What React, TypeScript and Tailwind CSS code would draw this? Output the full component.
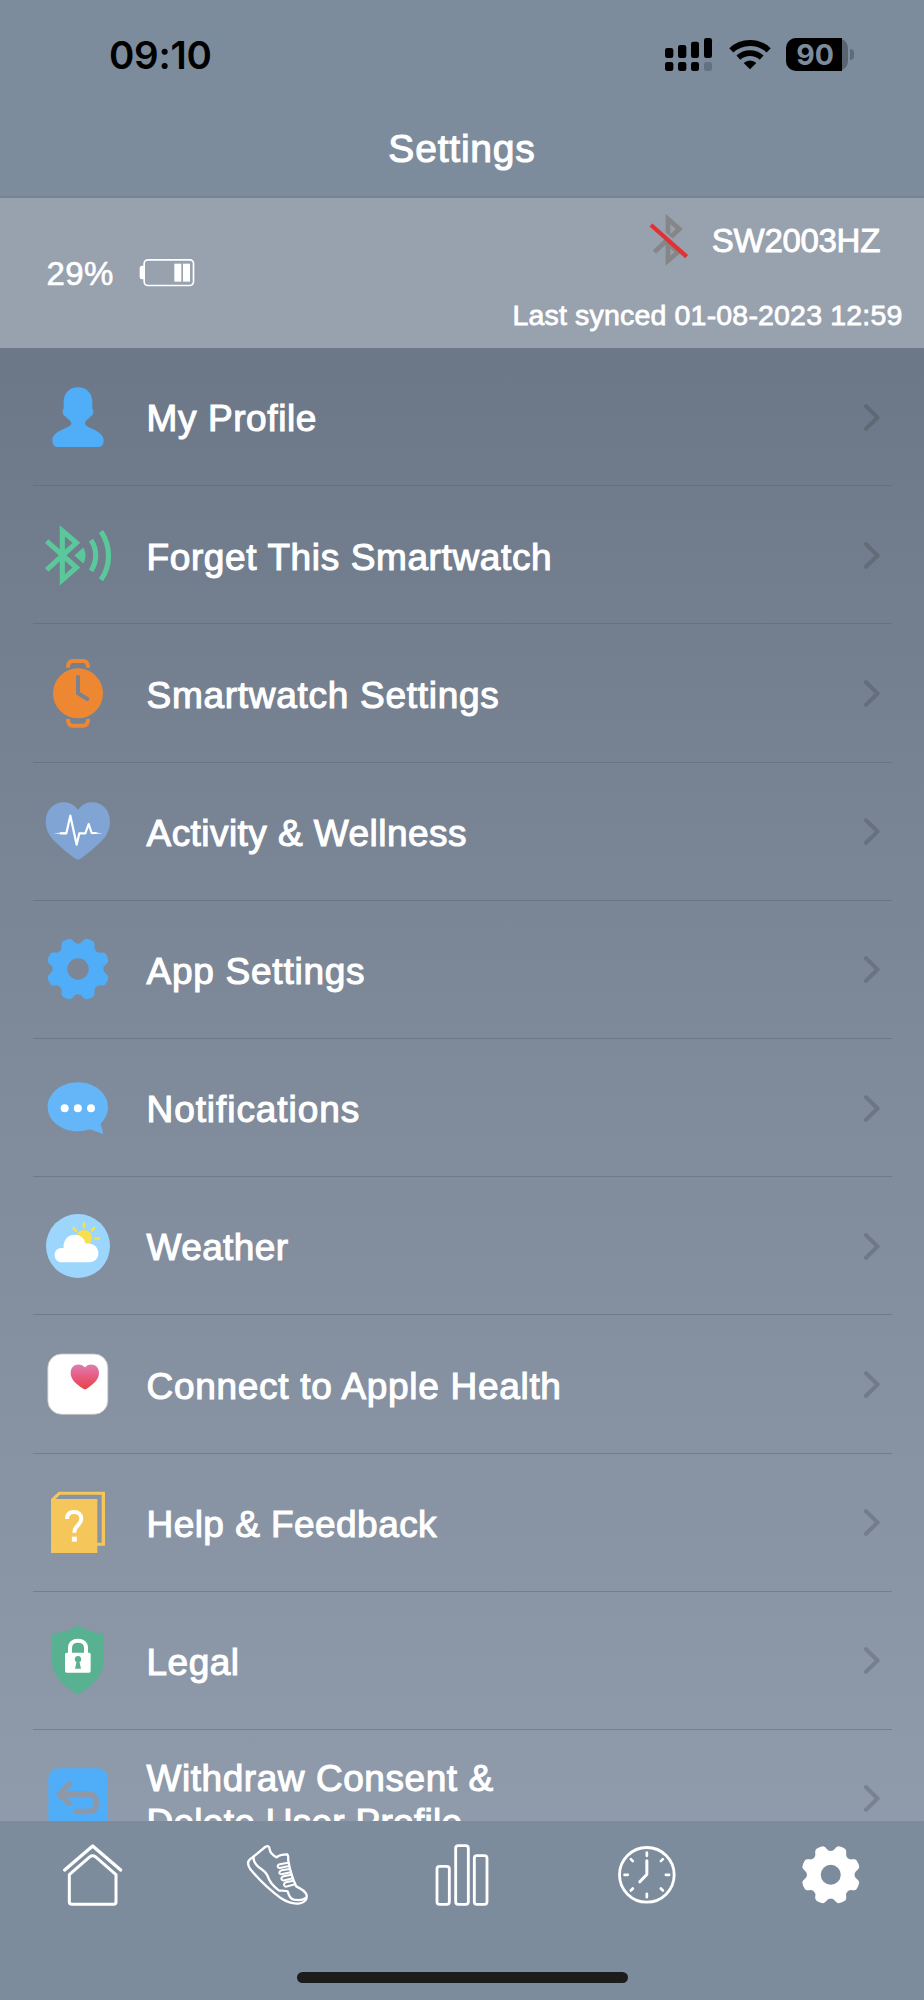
import React from "react";

/** Gear outline centred on the origin: eight teeth with scooped valleys between them. */
function gearPath(): string {
  const turn = (x: number, y: number, deg: number) => {
    const a = (deg * Math.PI) / 180;
    const px = x * Math.cos(a) - y * Math.sin(a);
    const py = x * Math.sin(a) + y * Math.cos(a);
    return `${px.toFixed(2)} ${py.toFixed(2)}`;
  };
  let d = "";
  for (let i = 0; i < 8; i++) {
    const r = i * 45;
    const p = (x: number, y: number) => turn(x, y, r);
    d += `${i === 0 ? "M" : "L"}${p(-25, -89)} `;
    d += `L${p(-20, -87)} C${p(-14, -84)} ${p(-14, -74)} ${p(0, -74)} `;
    d += `C${p(14, -74)} ${p(14, -84)} ${p(20, -87)} L${p(25, -89)} `;
    d += `Q${p(37, -87)} ${turn(-25, -89, r + 45)} `;
  }
  return d + "Z";
}
const GEAR = gearPath();

function Gear({ size, color, hole }: { size: number; color: string; hole: string }) {
  return (
    <svg width={size} height={size} viewBox="-108 -108 216 216">
      <path d={GEAR} fill={color} stroke={color} strokeWidth="4" strokeLinejoin="round" />
      <circle r="32" fill={hole} />
    </svg>
  );
}

function Icon({ box, children }: { box: string; children: React.ReactNode }) {
  return (
    <svg width="72" height="72" viewBox={box} fill="none" className="shrink-0">
      {children}
    </svg>
  );
}

const ProfileIcon = (
  <Icon box="126 92 216 216">
    <path
      fill="#50aef8"
      d="M234 111C208 111 191 129 191 156V175C186 178 187 194 195 197C200 205 214 210 214 219C214 236 157 238 157 270C157 283 163 290 172 290H296C305 290 311 283 311 270C311 238 255 236 255 219C255 210 268 205 273 197C281 194 282 178 277 175V156C277 129 260 111 234 111Z"
    />
  </Icon>
);

const BluetoothIcon = (
  <Icon box="126 506.5 216 216">
    <g stroke="#5ac89b" strokeWidth="15.500">
      <path d="M140 573L229 652L187 689V542L229 578L140 659" />
      <path d="M273 570A82 82 0 0 1 273 662" />
      <path d="M303 544A128 128 0 0 1 303 689" />
    </g>
    <path fill="#5ac89b" d="M223 616L250 592Q263 616 250 640Z" />
  </Icon>
);

const WatchIcon = (
  <Icon box="126 921 216 216">
    <circle cx="234" cy="1030" r="75" fill="#ee8732" />
    <g stroke="#ee8732" strokeWidth="12">
      <path d="M204 953V949Q206 933 218 933H250Q262 933 264 949V953" />
      <path d="M204 1107V1111Q206 1127 218 1127H250Q262 1127 264 1111V1107" />
    </g>
    <path d="M234 981V1030L262 1047" stroke="#7a8190" strokeWidth="12" strokeLinecap="round" strokeLinejoin="round" />
  </Icon>
);

const HeartIcon = (
  <Icon box="126 136 216 216">
    <path
      fill="#80a5d4"
      d="M234 181C224 166 209 158 191 158C160 158 137 182 137 216C137 238 147 258 164 275C183 294 203 311 224 326Q234 333 244 326C265 311 285 294 304 275C321 258 330 238 330 216C330 182 308 158 277 158C259 158 244 166 234 181Z"
    />
    <path d="M160 251L197 247.500V254Z M309 251L275 247.500V254Z" fill="#fff" />
    <path d="M180 251H199L211 198L230 285L238 251H256L266 223L275 250H290" stroke="#fff" strokeWidth="6.5" strokeLinejoin="round" />
  </Icon>
);

const ChatIcon = (
  <Icon box="126 965 216 216">
    <path
      fill="#64b6f9"
      d="M234 996C284 996 324 1029 324 1070C324 1090 315 1107 302 1120L310 1151L270 1137C259 1141 247 1143 234 1143C184 1143 143 1111 143 1070C143 1029 184 996 234 996Z"
    />
    <g fill="#fff">
      <circle cx="194" cy="1074" r="12" />
      <circle cx="233.500" cy="1074" r="12" />
      <circle cx="273" cy="1074" r="12" />
    </g>
  </Icon>
);

const WeatherIcon = (
  <Icon box="126 120 216 216">
    <circle cx="234" cy="228" r="96" fill="#9cd6fd" />
    <circle cx="252" cy="204" r="24" fill="#f8e04c" />
    <g stroke="#f8e04c" strokeWidth="8" strokeLinecap="round">
      <path d="M252 161V170M282 174L276 181M221 174L228 182M286 205.500H296" />
    </g>
    <path
      fill="#fff"
      d="M186 277C173 277 164 268 164 255C164 242 173 234 186 234H191C188 213 203 194 224 194C241 194 253 205 257 221C279 217 295 230 295 250C295 266 284 277 268 277Z"
    />
  </Icon>
);

const HealthIcon = (
  <Icon box="126 534.5 216 216">
    <defs>
      <linearGradient id="health" x1="0" y1="0" x2="0" y2="1">
        <stop offset="0" stopColor="#dc7fae" />
        <stop offset="0.5" stopColor="#e85a80" />
        <stop offset="1" stopColor="#e64442" />
      </linearGradient>
    </defs>
    <rect x="143.500" y="552.500" width="180" height="181" rx="41" fill="#fff" stroke="#c9c6c6" strokeWidth="2.500" />
    <path
      fill="url(#health)"
      d="M255 593C250 587 243 584 236 584C222 584 212 594 212 609C212 631 231 645 250 657Q255 660 260 657C278 645 297 631 297 609C297 594 287 584 273 584C266 584 259 587 255 593Z"
    />
  </Icon>
);

const HelpIcon = (
  <Icon box="126 949 216 216">
    <path fill="#f5c65a" d="M153 988L176 966H315V1128H292V1150H153ZM292 988V1119H305V975H180L167 988Z" fillRule="evenodd" />
    <path d="M201 1048C201 1033 209 1027 222 1027C235 1027 244 1034 244 1047C244 1067 223 1066 223 1089" stroke="#fff" strokeWidth="12" />
    <rect x="215.500" y="1101" width="15" height="15" fill="#fff" />
  </Icon>
);

const LegalIcon = (
  <Icon box="126 194 216 216">
    <path
      fill="#58b191"
      d="M234 198C257 213 283 221 312 224V299C312 348 280 378 234 407C188 378 155 348 155 299V224C184 221 211 213 234 198Z"
    />
    <path d="M210 284V266C210 252 220 244 234 244C248 244 258 252 258 266V284" stroke="#fff" strokeWidth="12" />
    <rect x="195" y="280" width="77" height="60" rx="5" fill="#fff" />
    <path fill="#58b191" d="M234 290A9.500 9.500 0 0 1 238.500 308L243 328H225L229.500 308A9.500 9.500 0 0 1 234 290Z" />
  </Icon>
);

const WithdrawIcon = (
  <Icon box="126 609.5 216 216">
    <rect x="145" y="628" width="178" height="178" rx="30" fill="#50aef8" />
    <path
      d="M208 675L178 706L208 734M180 706H266C280 706 289 716 289 732C289 748 280 758 266 758H229"
      stroke="#8d98a8"
      strokeWidth="17"
      strokeLinecap="round"
      strokeLinejoin="round"
    />
  </Icon>
);

type Line = { text: string; tracking: string };

const ROWS: { lines: Line[]; icon: React.ReactNode }[] = [
  { lines: [{ text: "My Profile", tracking: "tracking-[0.6px]" }], icon: ProfileIcon },
  { lines: [{ text: "Forget This Smartwatch", tracking: "tracking-[0.62px]" }], icon: BluetoothIcon },
  { lines: [{ text: "Smartwatch Settings", tracking: "tracking-[0.72px]" }], icon: WatchIcon },
  { lines: [{ text: "Activity & Wellness", tracking: "tracking-[0.45px]" }], icon: HeartIcon },
  { lines: [{ text: "App Settings", tracking: "tracking-[0.75px]" }], icon: <Gear size={72} color="#50aef8" hole="#7c8697" /> },
  { lines: [{ text: "Notifications", tracking: "tracking-[0.93px]" }], icon: ChatIcon },
  { lines: [{ text: "Weather", tracking: "tracking-[0.4px]" }], icon: WeatherIcon },
  { lines: [{ text: "Connect to Apple Health", tracking: "tracking-[0.7px]" }], icon: HealthIcon },
  { lines: [{ text: "Help & Feedback", tracking: "tracking-[0.45px]" }], icon: HelpIcon },
  { lines: [{ text: "Legal", tracking: "tracking-[0.5px]" }], icon: LegalIcon },
  {
    lines: [
      { text: "Withdraw Consent &", tracking: "tracking-[0.55px]" },
      { text: "Delete User Profile", tracking: "tracking-[0.28px]" },
    ],
    icon: WithdrawIcon,
  },
];

function StatusBar() {
  return (
    <div className="flex h-[110px] items-start justify-between pl-[109px] pr-[70px] text-black">
      <div className="mt-[31px] font-['Inter'] text-[38.5px] leading-[48px] font-semibold tracking-[-0.3px]">09:10</div>
      <div className="mt-[38px] flex items-start">
        <svg width="48" height="33" viewBox="610 114 144 99">
          <rect x="610" y="144" width="25" height="30" rx="7" />
          <rect x="649" y="135" width="25" height="39" rx="7" />
          <rect x="688" y="125" width="24" height="49" rx="7" />
          <rect x="727" y="114" width="24" height="60" rx="7" />
          <rect x="610" y="186" width="25" height="27" rx="7" />
          <rect x="649" y="186" width="25" height="27" rx="7" />
          <rect x="688" y="186" width="24" height="27" rx="7" />
          <rect x="727" y="186" width="24" height="27" rx="7" fill="#65717f" />
        </svg>
        <svg className="ml-[15.5px]" width="42" height="33" viewBox="799 114 126 99" fill="none">
          <path d="M806 151A82 82 0 0 1 918 151" stroke="#000" strokeWidth="18" />
          <path d="M827 173A52 52 0 0 1 897 173" stroke="#000" strokeWidth="17" />
          <path d="M862 208L843 189A27 27 0 0 1 881 189Z" fill="#000" />
        </svg>
        <div className="ml-[15.5px] flex h-[33px] items-center">
          <div className="flex h-[33px] w-[62px] items-center rounded-[10px] bg-[#586470]">
            <div className="flex h-full w-[56px] items-center justify-center rounded-l-[10px] bg-black pl-[2px] font-['Inter'] text-[28.5px] leading-[33px] font-bold text-[#7d8c9c]">
              90
            </div>
          </div>
          <div className="ml-[2px] h-[11px] w-[4px] rounded-r-full bg-[#5f6b78]" />
        </div>
      </div>
    </div>
  );
}

function DevicePanel() {
  return (
    <section className="flex h-[150px] justify-between bg-[#98a1ae]">
      <div className="flex items-start pl-[46.5px]">
        <div className="mt-[56px] w-[70px] text-[33px] leading-[40px] tracking-[0.4px] [-webkit-text-stroke:0.6px_white]">29%</div>
        <svg className="mt-[61px] ml-[22.500px]" width="56" height="28" viewBox="418 777 168 84" fill="none">
          <rect x="433.500" y="779.500" width="148" height="77" rx="11" stroke="#fff" strokeWidth="5" />
          <path fill="#fff" d="M433 797H427Q420 797 420 805V831Q420 838 427 838H433Z" />
          <rect x="524" y="791" width="21" height="54" fill="#fff" />
          <rect x="550" y="791" width="21" height="54" fill="#fff" />
        </svg>
      </div>
      <div className="flex flex-col items-end">
        <div className="flex items-start pr-[44px]">
          <svg className="mt-[16px]" width="40" height="52" viewBox="562 642 120 156" fill="none">
            <path d="M578 756L653 687L619 657V782L648 757L620 728" stroke="#868686" strokeWidth="14" />
            <path d="M575 669L682 764" stroke="#98a1ae" strokeWidth="8" />
            <path d="M568 675L675 770" stroke="#e03236" strokeWidth="13" />
          </svg>
          <div className="mt-[23px] ml-[22.500px] text-[33px] leading-[40px] tracking-[-0.3px] [-webkit-text-stroke:0.9px_white]">SW2003HZ</div>
        </div>
        <div className="mt-[31px] pr-[21.5px] text-[28.5px] leading-[36px] tracking-[0.18px] [-webkit-text-stroke:0.8px_white]">
          Last synced 01-08-2023 12:59
        </div>
      </div>
    </section>
  );
}

function Chevron() {
  return (
    <svg width="16" height="27" viewBox="0 0 16 27" fill="none" className="mt-[1px]">
      <path d="M2 2.200L13.600 13.500L2 24.800" stroke="#2c2c2c" strokeOpacity="0.22" strokeWidth="4" strokeLinecap="round" strokeLinejoin="round" />
    </svg>
  );
}

function TabBar() {
  return (
    <nav className="flex h-[179px] flex-col items-center bg-[#7d8c9c]">
      <div className="grid w-full grid-cols-5 justify-items-center pt-[18px]">
        <Icon box="169 836 216 216">
          <g stroke="#fff" strokeLinecap="round" strokeLinejoin="round">
            <path d="M195 929L279 857L363 929" strokeWidth="10" />
            <path d="M279 886Q283 886 287 889L349 943V1025Q349 1032 342 1032H217Q209 1032 209 1025V943L271 889Q275 886 279 886Z" strokeWidth="9" />
          </g>
        </Icon>
        <Icon box="723.5 836 216 216">
          <g stroke="#fff" strokeWidth="7" strokeLinecap="round" strokeLinejoin="round">
            <path d="M761 889L796 860Q808 853 809 865Q811 882 831 891Q837 883 862 882Q866 884 865 899C870 930 878 955 889 978Q915 990 920 1003C923 1016 915 1027 900 1029C880 1032 860 1025 844 1014C810 989 775 955 751 926Q739 907 750 897Z" />
            <path d="M761 889Q760 907 777 921Q797 934 803 946Q810 971 838 991Q861 990 864 994Q869 1015 882 1018Q905 1022 918 1013" />
            <path d="M865 907L840 912Q832 914 834 920Q836 924 843 922L868 917M870 926L845 930Q837 933 839 939Q841 943 848 941L873 936M875 943L851 948Q843 951 845 957Q848 962 854 960L879 954M881 961L858 966Q851 969 853 975Q856 981 863 978L886 972" strokeWidth="6" />
          </g>
        </Icon>
        <Icon box="1278 836 216 216">
          <g stroke="#fff" strokeWidth="8.5">
            <rect x="1311" y="918" width="37" height="114" rx="8" />
            <rect x="1367" y="856" width="38" height="176" rx="8" />
            <rect x="1423" y="886" width="38" height="146" rx="8" />
          </g>
        </Icon>
        <Icon box="630.500 416.500 216 216">
          <g stroke="#fff" strokeLinecap="round" strokeLinejoin="round">
            <circle cx="738" cy="524" r="82" strokeWidth="8.500" />
            <path d="M738 482V523L717 545" strokeWidth="9" />
            <path d="M738 457V467M738 581V591M671 524H681M795 524H805M690 477L696 483M786 477L780 483M690 571L696 565M786 571L780 565" strokeWidth="8" />
          </g>
        </Icon>
        <div className="flex h-[72px] w-[72px] items-center justify-center pr-[1px]">
          <Gear size={67.5} color="#ffffff" hole="#7d8c9c" />
        </div>
      </div>
      <div className="mt-[61px] h-[11px] w-[331px] rounded-full bg-[#1c1c1c]" />
    </nav>
  );
}

export default function App() {
  return (
    <div className="flex h-[2000px] w-[924px] flex-col overflow-hidden bg-[#7d8c9c] font-['Liberation_Sans',Arial,sans-serif] text-white">
      <header className="h-[198px] shrink-0 border-b-2 border-[#758493] bg-[#7d8c9c]">
        <StatusBar />
        <h1 className="mt-[16px] text-center text-[39px] leading-[46px] font-normal tracking-[0.8px] [-webkit-text-stroke:1.1px_white]">Settings</h1>
      </header>
      <DevicePanel />
      <main className="min-h-0 flex-1 overflow-hidden bg-linear-to-b from-[#6c7888] via-[#7f8a9a] to-[#8f9aab]">
        {ROWS.map((row) => (
          <div key={row.lines[0].text} className="flex h-[138.2px] flex-col">
            <div className="flex min-h-0 flex-1 items-center pr-[44px] pl-[42px]">
              {row.icon}
              <div className="ml-[32.5px] flex-1 pt-[5.5px] text-[37px] leading-[44px] whitespace-nowrap [-webkit-text-stroke:1.1px_white]">
                {row.lines.map((line) => (
                  <div key={line.text} className={line.tracking}>
                    {line.text}
                  </div>
                ))}
              </div>
              <Chevron />
            </div>
            <div className="mr-[32px] ml-[32.5px] h-px shrink-0 bg-[#59636f]/45" />
          </div>
        ))}
      </main>
      <TabBar />
    </div>
  );
}
